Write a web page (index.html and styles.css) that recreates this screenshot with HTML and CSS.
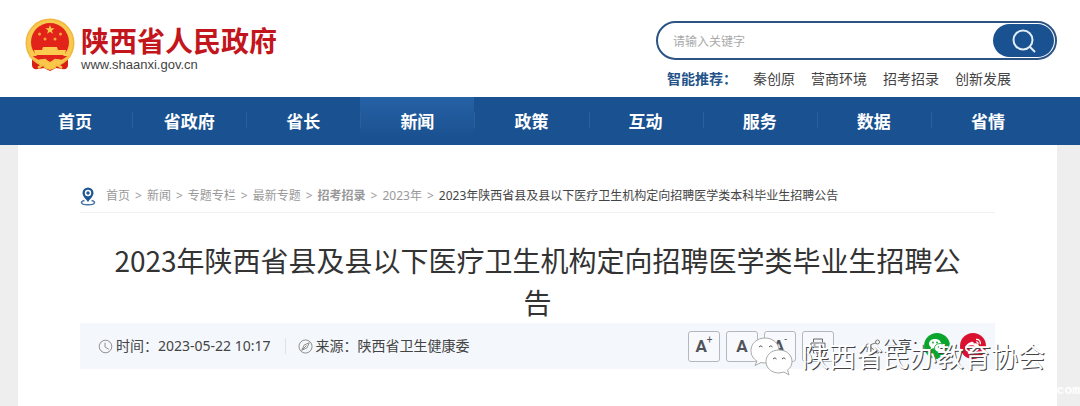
FILE: index.html
```html
<!DOCTYPE html>
<html lang="zh-CN">
<head>
<meta charset="utf-8">
<title>陕西省人民政府</title>
<link rel="stylesheet" href="styles.css">
</head>
<body>
<header class="header">
  <a class="brand" href="#">
    <svg class="emblem" viewBox="0 0 50 54" aria-hidden="true">
      <path d="M7 34 L7 47 Q7 52 13 51 L19 50 L25 53 L31 50 L37 51 Q43 52 43 47 L43 34Z" fill="#d81f14"/>
      <circle cx="25" cy="25" r="24.500" fill="#f0b840"/>
      <circle cx="25" cy="25" r="23" fill="#f8ca50"/>
      <circle cx="25" cy="24" r="19" fill="#e2231a"/>
      <path d="M25 7l1.200 3.200 3.400.1-2.700 2.100 1 3.300-2.900-1.900-2.900 1.900 1-3.300-2.700-2.100 3.400-.1z" fill="#fbc94a"/>
      <g fill="#f7a83c"><circle cx="14.500" cy="16" r="1.500"/><circle cx="35.500" cy="16" r="1.500"/><circle cx="20" cy="21" r="1.500"/><circle cx="30" cy="21" r="1.500"/></g>
      <path d="M18 29h14l1 3h8l-1 5H10l-1-5h8z" fill="#fbcb50"/>
      <path d="M8 38h34l-3 5-8-2-6 3-6-3-8 2z" fill="#e2231a"/>
      <path d="M5 38l8 5 7-1 5 4 5-4 7 1 8-5M13 50l7-5M37 50l-7-5" fill="none" stroke="#f8c348" stroke-width="2.500"/>
      <path d="M21 45h8l2 5-6 2-6-2z" fill="#f9c848"/>
    </svg>
    <span class="brand-text">
      <span class="brand-name">陕西省人民政府</span>
      <span class="brand-url">www.shaanxi.gov.cn</span>
    </span>
  </a>
  <div class="finder">
    <form class="search">
      <input class="search-input" type="text" placeholder="请输入关键字" aria-label="请输入关键字">
      <button class="search-button" type="button" aria-label="搜索">
        <svg viewBox="0 0 24 24" aria-hidden="true"><circle cx="11" cy="11" r="9.500"/><path d="M18 18l5 5"/></svg>
      </button>
    </form>
    <div class="hot">
      <strong class="hot-label">智能推荐：</strong>
      <a href="#">秦创原</a>
      <a href="#">营商环境</a>
      <a href="#">招考招录</a>
      <a href="#">创新发展</a>
    </div>
  </div>
</header>
<nav class="nav">
  <div class="nav-list">
    <a href="#">首页</a>
    <a href="#">省政府</a>
    <a href="#">省长</a>
    <a class="active" href="#">新闻</a>
    <a href="#">政策</a>
    <a href="#">互动</a>
    <a href="#">服务</a>
    <a href="#">数据</a>
    <a href="#">省情</a>
  </div>
</nav>
<main class="panel">
  <div class="crumbs">
    <svg class="pin" viewBox="0 0 16 19" aria-hidden="true">
      <path d="M4.500 13.500C2.500 14 1.500 14.500 1.500 15.500c0 3 13 3 13 0 0-1-1-1.500-3-2" fill="none" stroke="#4673a8" stroke-width="1.500"/>
      <path d="M8 15C5 11 2.500 9 2.500 6a5.500 5.500 0 0 1 11 0c0 3-2.500 5-5.500 9z" fill="#1f5796"/>
      <circle cx="8" cy="6" r="3.200" fill="#fff"/><circle cx="8" cy="6" r="1.700" fill="#1f5796"/>
    </svg>
    <a href="#">首页</a><span>&gt;</span>
    <a href="#">新闻</a><span>&gt;</span>
    <a href="#">专题专栏</a><span>&gt;</span>
    <a href="#">最新专题</a><span>&gt;</span>
    <a class="strong" href="#">招考招录</a><span>&gt;</span>
    <a href="#">2023年</a><span>&gt;</span>
    <span class="current">2023年陕西省县及县以下医疗卫生机构定向招聘医学类本科毕业生招聘公告</span>
  </div>
  <h1 class="title">2023年陕西省县及县以下医疗卫生机构定向招聘医学类毕业生招聘公告</h1>
  <div class="meta">
    <div class="meta-item">
      <svg class="meta-icon" viewBox="0 0 16 16" aria-hidden="true"><circle cx="8" cy="8" r="6.700"/><path d="M7.500 4v4.500l4 2.500"/></svg>
      <span>时间：2023-05-22 10:17</span>
    </div>
    <div class="meta-item divided">
      <svg class="meta-icon" viewBox="0 0 16 16" aria-hidden="true"><circle cx="8" cy="8" r="7"/><path d="M12 4L9.500 9.500 4 12l2.500-5.500zM4.500 11.500L9 7"/></svg>
      <span>来源：陕西省卫生健康委</span>
    </div>
    <div class="tools">
      <button class="tool" type="button" aria-label="放大字号">A<sup>+</sup></button>
      <button class="tool" type="button" aria-label="默认字号">A</button>
      <button class="tool" type="button" aria-label="缩小字号">A<sup>-</sup></button>
      <button class="tool" type="button" aria-label="打印">
        <svg viewBox="0 0 18 18" aria-hidden="true"><path d="M4.500 5V2h9v3M4.500 13H2V6h14v7h-2.500M4.500 10h9v6h-9zM4.500 8h2"/></svg>
      </button>
    </div>
    <div class="share">
      <svg class="share-icon" viewBox="0 0 16 16" aria-hidden="true"><path d="M2 14c0-5 3-8 9-9M5 9l6 4"/><circle cx="12.500" cy="4" r="2"/><circle cx="12.500" cy="13" r="2"/><circle cx="3" cy="8" r="2"/></svg>
      <span>分享：</span>
      <a href="#" aria-label="微信"><svg class="social" viewBox="0 0 26 26" aria-hidden="true">
        <circle cx="13" cy="13" r="13" fill="#0aa52c"/>
        <path d="M11 6c-4 0-6 2.200-6 4.800 0 1.500.8 2.700 2 3.500L6.500 16.500l2.500-1.200 2 .2c4 0 6-2.200 6-4.700S15 6 11 6z" fill="#fff"/>
        <path d="M16 10.500c-3.200 0-5.500 2-5.500 4.500s2.300 4.300 5.500 4.300l1.800-.3 2 1-.5-1.800c1.400-.8 2.200-1.800 2.200-3.200 0-2.500-2.300-4.500-5.500-4.500z" fill="#fff" stroke="#0aa52c" stroke-width=".8"/>
        <g fill="#0aa52c"><circle cx="9" cy="9.500" r=".9"/><circle cx="13" cy="9.500" r=".9"/><circle cx="14.500" cy="14" r=".8"/><circle cx="18" cy="14" r=".8"/></g>
      </svg></a>
      <a href="#" aria-label="微博"><svg class="social" viewBox="0 0 26 26" aria-hidden="true">
        <circle cx="13" cy="13" r="13" fill="#d8122f"/>
        <path d="M11 9c2-.8 3 0 2.600 1.600 2.400-.8 4 0 3.300 1.800 1.600.5 2.200 1.400 2.200 2.600 0 2.500-3.500 4.500-7.300 4.500S5 17.700 5 15.200 8 10.200 11 9z" fill="#fff"/>
        <ellipse cx="11.500" cy="15.200" rx="4.500" ry="3" fill="#d8122f"/><circle cx="11" cy="15.500" r="1.700" fill="#fff"/>
        <path d="M16 6.500c3-.5 5 2 4.200 4.800M16.200 9c1.300-.2 2 .7 1.700 1.900" fill="none" stroke="#fff" stroke-width="1.300"/>
      </svg></a>
    </div>
    <div class="watermark">
      <svg viewBox="0 0 44 40" aria-hidden="true">
        <path d="M15 1C7 1 1 6.500 1 13.500c0 5 2.500 8.500 6 10.500l-2 4.500 6-3c8 2 18-2 18-12C29 6.500 23 1 15 1z"/>
        <path d="M29 13c-7.500 0-13 5-13 11.500S21.500 36 29 36l5-1 5 3-1.500-5c3-2 4.500-5 4.500-8.500C42 18 36.500 13 29 13z"/>
        <path class="eyes" d="M9 10q2-2.500 3.500 0M19 10q2-2.500 3.500 0M23 22q2-2.500 3.500 0M32 22q2-2.500 3.500 0"/>
      </svg>
      <span>陕西省民办教育协会</span>
    </div>
  </div>
</main>
<footer class="site-mark">com</footer>
</body>
</html>
```
FILE: styles.css
```css
* { box-sizing: border-box; }
body {
  margin: 0;
  min-height: 100vh;
  display: flex;
  flex-direction: column;
  position: relative;
  overflow: hidden;
  background: #eee;
  color: #444;
  font: 14px/20px "Noto Sans", "Noto Sans CJK SC", sans-serif;
}
a { color: inherit; text-decoration: none; }
button { padding: 0; font: inherit; cursor: pointer; }

.header {
  display: flex;
  justify-content: space-between;
  align-items: flex-start;
  height: 97px;
  padding: 18px 23px 0 25px;
  background: #fff;
}
.brand { display: flex; align-items: flex-start; gap: 6px; }
.emblem { width: 50px; height: 54px; }
.brand-text { display: flex; flex-direction: column; padding-top: 7px; }
.brand-name { color: #c3161c; font-size: 28px; line-height: 32px; font-weight: 700; }
.brand-url { color: #444; font: 13px/16px "Liberation Sans", Arial, sans-serif; }

.finder { width: 401px; padding-top: 3px; }
.search {
  display: flex;
  height: 39px;
  padding: 1px;
  border: 2px solid #2b5485;
  border-radius: 20px;
}
.search-input {
  flex: 1;
  min-width: 0;
  padding: 0 14px;
  border: 0;
  outline: 0;
  background: none;
  font: 12px/20px "Noto Sans CJK SC", sans-serif;
}
.search-input::placeholder { color: #aaa; }
.search-button {
  display: grid;
  place-items: center;
  width: 61px;
  border: 0;
  border-radius: 17px;
  background: #1a5190;
}
.search-button svg { width: 24px; height: 24px; fill: none; stroke: #e4eef8; stroke-width: 2; }
.hot { display: flex; gap: 16px; padding: 9px 0 0 11px; }
.hot-label { color: #235389; }

.nav { padding: 0 35px 0 18px; background: #1a5190; }
.nav-list { display: grid; grid-template-columns: repeat(9, 1fr); }
.nav a {
  position: relative;
  padding: 12px 0;
  color: #fff;
  font: 700 17px/24px "Noto Sans CJK SC", sans-serif;
  text-align: center;
}
.nav a + a::before {
  content: "";
  position: absolute;
  left: 0;
  top: 15px;
  height: 16px;
  border-left: 1px solid #2c609b;
}
.nav .active { background: linear-gradient(#2762a6, #1a5190 85%); }

.panel {
  flex: 1;
  margin: 0 23px 0 18px;
  padding: 38px 62px;
  background: #fff;
}
.crumbs {
  display: flex;
  align-items: center;
  gap: 5px;
  height: 30px;
  padding-bottom: 3px;
  border-bottom: 1px solid #f0f0f0;
  color: #999;
  font-size: 12px;
  white-space: nowrap;
}
.pin { width: 16px; height: 19px; margin-right: 5px; }
.crumbs .strong { font-weight: 700; }
.crumbs .current { color: #444; }
.title {
  margin: 0;
  padding: 26px 30px 0;
  color: #333;
  font: 400 28px/42px "Noto Sans CJK SC", sans-serif;
  text-align: center;
}
.meta {
  position: relative;
  display: flex;
  align-items: center;
  height: 46px;
  padding: 0 9px 0 18px;
  background: #f4f7fb;
}
.meta-item { display: flex; align-items: center; gap: 3px; white-space: nowrap; }
.divided { margin-left: 14px; padding-left: 12px; border-left: 1px solid #dde3ec; line-height: 16px; }
.meta-icon { width: 15px; height: 15px; fill: none; stroke: #888; stroke-width: 1; }
.tools { display: flex; gap: 6px; margin-left: auto; }
.tool {
  display: flex;
  align-items: center;
  justify-content: center;
  width: 32px;
  height: 31px;
  border: 1px solid #b4b7bf;
  border-radius: 3px;
  background: #f7f9fc;
  color: #50535a;
  font: 700 17px/20px Roboto, sans-serif;
}
.tool sup { align-self: flex-start; font-size: 10px; line-height: 16px; font-weight: 400; }
.tool svg { width: 18px; height: 18px; fill: none; stroke: #666; stroke-width: 1; }
.share { display: flex; align-items: center; gap: 3px; margin-left: 31px; }
.share a { display: flex; margin-left: 7px; }
.share a:first-of-type { margin-left: -5px; }
.share-icon { width: 16px; height: 16px; fill: none; stroke: #777; stroke-width: 1; }
.social { width: 26px; height: 26px; }

.watermark {
  position: absolute;
  right: -50px;
  top: 12px;
  display: flex;
  align-items: center;
  gap: 8px;
  color: #fff;
  font-size: 27px;
  line-height: 44px;
  white-space: nowrap;
  text-shadow: 1px 1px 0 #444;
}
.watermark svg { width: 44px; height: 40px; fill: #fff; stroke: #aaa; stroke-width: 1; }
.watermark .eyes { stroke: #555; }
.site-mark {
  position: absolute;
  right: 0;
  bottom: 8px;
  color: #fff;
  font: 700 13px/16px "Liberation Mono", monospace;
}
```
